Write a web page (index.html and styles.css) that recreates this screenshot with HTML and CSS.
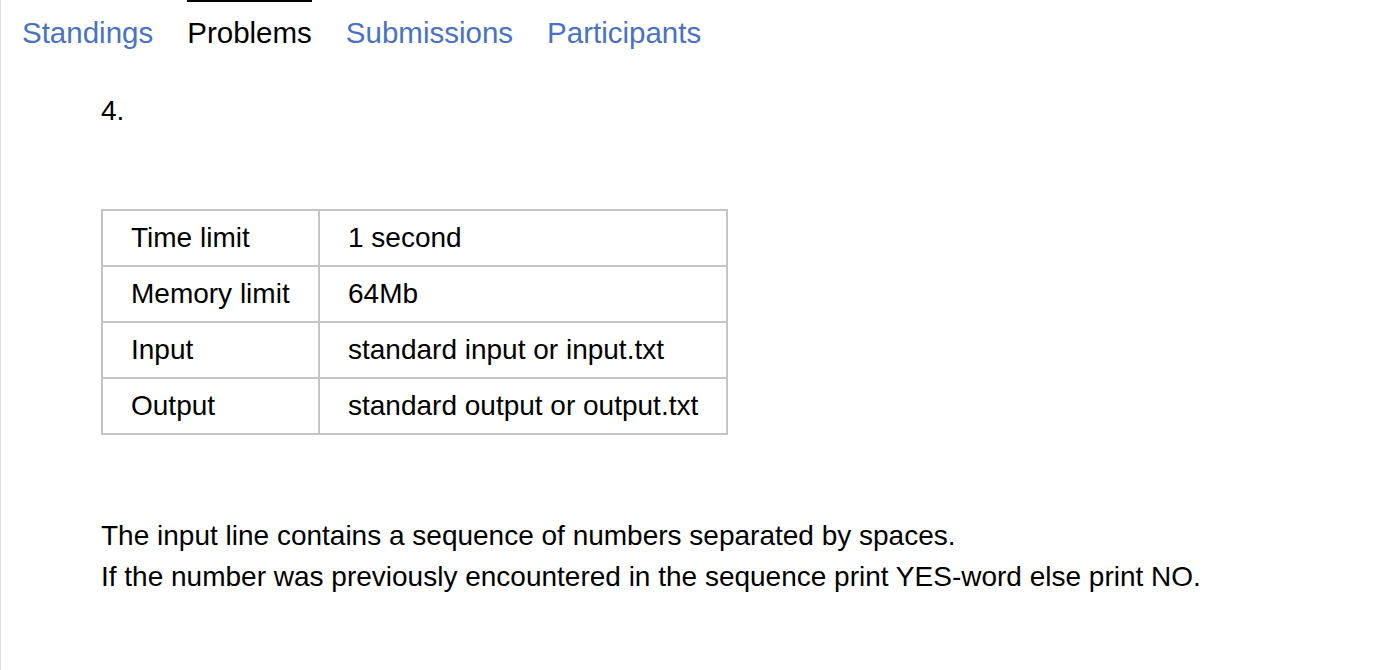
FILE: index.html
```html
<!DOCTYPE html>
<html lang="en">
<head>
<meta charset="utf-8">
<title>Problem 4</title>
<link rel="stylesheet" href="styles.css">
</head>
<body>
<div class="page">
  <nav class="tabs">
    <a class="tab" href="#">Standings</a>
    <a class="tab tab-active" href="#">Problems</a>
    <a class="tab" href="#">Submissions</a>
    <a class="tab" href="#">Participants</a>
  </nav>
  <main class="problem">
    <h1 class="title">4.</h1>
    <div class="limits">
      <div class="cell">Time limit</div>
      <div class="cell">1 second</div>
      <div class="cell">Memory limit</div>
      <div class="cell">64Mb</div>
      <div class="cell">Input</div>
      <div class="cell">standard input or input.txt</div>
      <div class="cell">Output</div>
      <div class="cell">standard output or output.txt</div>
    </div>
    <div class="statement">
      <p>The input line contains a sequence of numbers separated by spaces.</p>
      <p>If the number was previously encountered in the sequence print YES-word else print NO.</p>
    </div>
  </main>
</div>
</body>
</html>
```

FILE: styles.css
```css
html, body {
  margin: 0;
  padding: 0;
  background: #ffffff;
}

body {
  font-family: "Liberation Sans", Arial, sans-serif;
  color: #000000;
}

.page {
  min-height: 670px;
  border-left: 1px solid #e2e2e2;
  box-sizing: border-box;
}

.tabs {
  display: flex;
  gap: 34px;
  padding-left: 21px;
}

.tab {
  font-size: 29.5px;
  line-height: 34px;
  padding-top: 14px;
  border-top: 2px solid transparent;
  color: #4a72c1;
  text-decoration: none;
}

.tab-active {
  color: #000000;
  border-top-color: #000000;
}

.problem {
  padding-left: 100px;
}

.title {
  margin: 45px 0 0 0;
  font-size: 28px;
  line-height: 32px;
  font-weight: normal;
}

.limits {
  margin-top: 82px;
  display: grid;
  grid-template-columns: 217px 408px;
  width: max-content;
  border-top: 2px solid #c4c4c4;
  border-left: 2px solid #c4c4c4;
}

.cell {
  box-sizing: border-box;
  border-right: 2px solid #c4c4c4;
  border-bottom: 2px solid #c4c4c4;
  padding: 11px 0 11px 28px;
  font-size: 28px;
  line-height: 32px;
  white-space: nowrap;
}

.statement {
  margin-top: 81px;
  font-size: 28px;
  line-height: 40.5px;
}

.statement p {
  margin: 0;
}
```
